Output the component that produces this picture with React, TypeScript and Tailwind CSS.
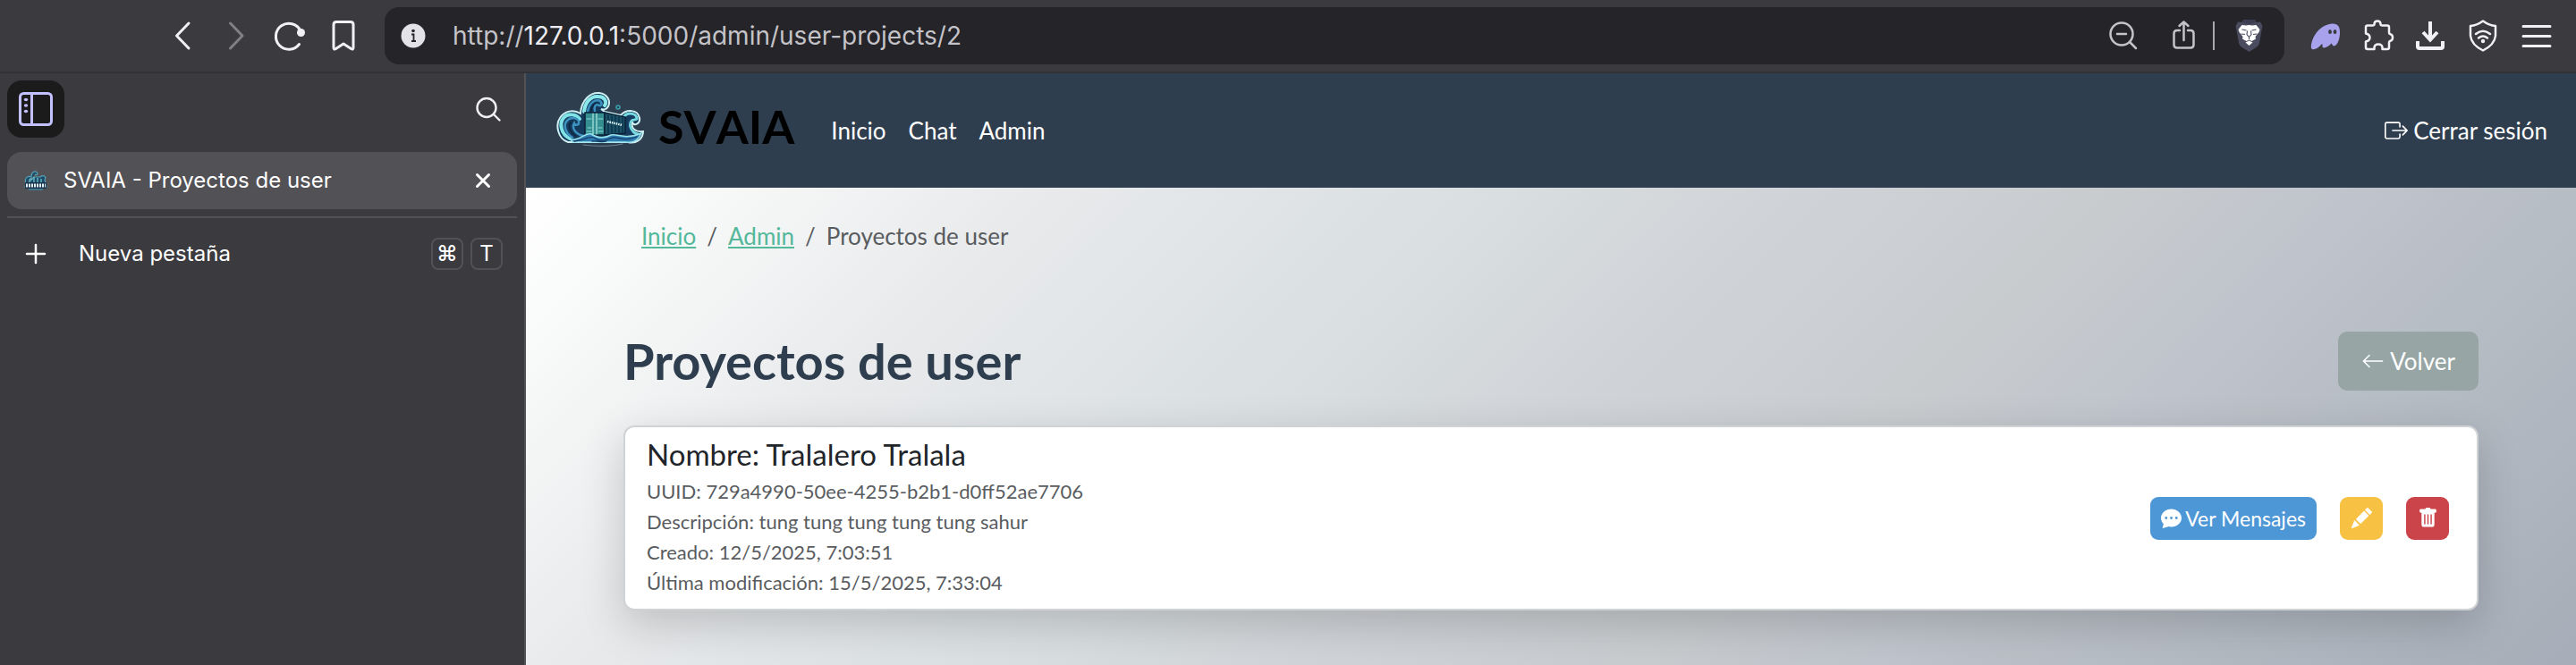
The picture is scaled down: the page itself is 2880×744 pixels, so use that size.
import { BsArrowLeft, BsBoxArrowRight, BsChatDotsFill, BsPencilFill, BsTrashFill } from "react-icons/bs";

const toolButton = "flex h-12 w-12 items-center justify-center";

function LogoMark({ className }: { className: string }) {
  return (
    <svg viewBox="0 0 98 62" className={className} aria-hidden="true" fill="none" strokeLinecap="round">
      <path
        d="M13 57 C1 53 -1 37 4 30 C9 22 19 20 27 25 C28 10 38 1 48 2 C57 3 61 11 58 17 C56 21 52 21 50 20 L54 23 L72 27 C78 20 91 20 93 30 C94 37 87 39 85 35 C83 41 88 46 97 45 C97 54 89 59 80 57 Z"
        fill="#153a5c"
        stroke="#cdf1f2"
        strokeWidth="2"
      />
      <path d="M15 53 C5 48 3 36 8 30 C13 24 23 26 26 31" stroke="#7fe3e6" strokeWidth="4" />
      <path d="M18 52 C9 46 8 37 12 33 C16 28 24 30 25 34 C26 38 21 39 20 36 C17 41 21 48 30 50" stroke="#3d93bf" strokeWidth="2.5" />
      <path d="M22 50 C14 45 13 39 16 35" stroke="#0c2440" strokeWidth="1.4" />
      <path d="M31 23 C32 12 39 5 47 6 C54 6 57 12 54 16" stroke="#8be8ea" strokeWidth="4" />
      <path d="M35 23 C36 15 41 10 47 10 C52 12 51 17 48 16 C43 13 42 19 43 22" stroke="#3a8fbd" strokeWidth="2.5" />
      <path d="M39 22 C39 18 41 15 44 13" stroke="#0c2440" strokeWidth="1.3" />
      <path d="M76 28 C81 23 90 25 90 31 C88 33 85 31 83 33 C80 39 84 46 91 48" stroke="#74dbe0" strokeWidth="3" />
      <path d="M80 29 C85 26 88 29 86 30 C80 31 78 40 84 46" stroke="#173f66" strokeWidth="1.5" />
      <path d="M32 24 H54 V49 H32 Z" fill="#338f91" stroke="#0b2238" strokeWidth="1.5" />
      <path d="M54 24 L77 29 V47 L54 49 Z" fill="#1b5267" stroke="#0b2238" strokeWidth="1.5" />
      <path d="M41 25 V48 M45 25 V48" stroke="#bdeeea" strokeWidth="1.1" />
      <path d="M34 31 H39 M47 31 H52 M35 41 H39 M47 41 H51 M34 45 H39 M47 45 H52" stroke="#8fd8d4" strokeWidth="1" />
      <path d="M58 27 V47 M62 28 V47 M66 28 V46 M70 29 V46 M74 30 V46" stroke="#0b2f45" strokeWidth="1.3" />
      <path d="M57 34 L74 38" stroke="#dff5f5" strokeWidth="2.5" strokeDasharray="1.500 1" strokeLinecap="butt" />
      <path d="M16 54 C27 56 31 46 39 48 C47 53 54 53 61 49 C69 47 76 55 95 47 C91 57 84 58 78 57 H18 Z" fill="#2f7cb0" stroke="#9ae4ec" strokeWidth="1.5" />
      <path d="M20 56 C34 54 36 50 42 52 C50 58 58 54 63 52 C70 51 74 57 90 51 M40 56 C46 55 50 58 56 56" stroke="#143c69" strokeWidth="1.3" />
      <circle cx="69" cy="18" r="2" stroke="#38a3b0" strokeWidth="1.500" />
      <path d="M30 60 C45 62 62 62 74 59" stroke="#6f8497" strokeWidth="1" />
    </svg>
  );
}

function Favicon() {
  return (
    <svg viewBox="0 0 26 22" className="h-[22px] w-[26px]" aria-hidden="true" fill="none">
      <path d="M2 15 C0 9 3 5 8 7 C8 1 13 -1 15 3 C15 5 13 5 12 4 M11 7 H18 C22 4 25 7 23 10 L25 18 H1 Z" fill="#1d4a66" stroke="#55a5ba" strokeWidth="1.2" />
      <path d="M6 12 C5 9 8 8 9 10 M11 7 V13 M15 8 V13 M19 9 V13" stroke="#6fc5d0" strokeWidth="1.3" />
      <path d="M1 13 H25 V20 H1 Z" fill="#17334d" />
      <path d="M2 16.500 H24" stroke="#e4f1f5" strokeWidth="4" strokeDasharray="2 1" />
      <path d="M5 21 H21" stroke="#3f8098" strokeWidth="1.5" />
    </svg>
  );
}

function Toolbar() {
  return (
    <header className="flex h-[82px] items-center border-b-2 border-[#323136] bg-[#3b3a3f] pr-5 pl-[180px] text-[#f1f0f5]">
      <nav aria-label="Navegación" className="flex w-[250px] items-center gap-3">
        <button aria-label="Atrás" className={toolButton}>
          <svg viewBox="0 0 48 48" className="size-12" fill="none" stroke="currentColor" strokeWidth="3" strokeLinecap="round" strokeLinejoin="round"><path d="M31 10 L17.500 24 L31 38" /></svg>
        </button>
        <button aria-label="Adelante" className="flex h-12 w-12 items-center justify-center text-[#818085]">
          <svg viewBox="0 0 48 48" className="size-12" fill="none" stroke="currentColor" strokeWidth="3" strokeLinecap="round" strokeLinejoin="round"><path d="M17.500 10 L31 24 L17.500 38" /></svg>
        </button>
        <button aria-label="Recargar" className={toolButton}>
          <svg viewBox="0 0 48 48" className="size-12" fill="none" stroke="currentColor" strokeWidth="3" strokeLinecap="round"><path d="M34.500 33.500 A14.500 14.500 0 1 1 36 18.500" /><circle cx="36.500" cy="20.500" r="4.500" fill="currentColor" stroke="none" /></svg>
        </button>
        <button aria-label="Guardar marcador" className={toolButton}>
          <svg viewBox="0 0 48 48" className="size-12" fill="none" stroke="currentColor" strokeWidth="3" strokeLinejoin="round"><path d="M13 11.500 Q13 8.500 16 8.500 H32 Q35 8.500 35 11.500 V37 Q35 40 32.500 38.500 L24 33 L15.500 38.500 Q13 40 13 37 Z" /></svg>
        </button>
      </nav>
      <div className="flex h-16 flex-1 items-center rounded-2xl bg-[#252429] pr-[18px] pl-[18px] text-[#c4c3c8]">
        <svg viewBox="0 0 28 28" className="size-7 text-[#e3e2e9]" aria-hidden="true"><circle cx="14" cy="14" r="13.500" fill="currentColor" /><circle cx="14" cy="8.500" r="1.800" fill="#252429" /><path d="M12 12.500 H14.500 V20 M12 20 H17" fill="none" stroke="#252429" strokeWidth="1.800" /></svg>
        <span className="flex-1 pl-[30px] text-[28px] leading-10"><span>http://</span><span className="text-[#edecf2]">127.0.0.1</span><span>:5000/admin/user-projects/2</span></span>
        <div className="flex items-center">
          <button aria-label="Alejar" className={toolButton}>
            <svg viewBox="0 0 48 48" className="size-12" fill="none" stroke="currentColor" strokeWidth="2.500" strokeLinecap="round"><circle cx="22" cy="22" r="12.500" /><path d="M31.500 31.500 L38 38 M17 22 H27" /></svg>
          </button>
          <button aria-label="Compartir" className="ml-5 flex h-12 w-12 items-center justify-center">
            <svg viewBox="0 0 48 48" className="size-12" fill="none" stroke="currentColor" strokeWidth="2.500" strokeLinecap="round" strokeLinejoin="round"><path d="M19 18 H16 Q12.500 18 12.500 21.500 V34 Q12.500 37.500 16 37.500 H31 Q34.500 37.500 34.500 34 V21.500 Q34.500 18 31 18 H28 M23.500 29 V9 M18.500 13 L23.500 8.500 L28.500 13" /></svg>
          </button>
          <span className="ml-2 h-8 w-0.5 bg-[#aaa9ae]" />
          <button aria-label="Brave Shields" className="ml-4 flex h-12 w-11 items-center justify-center">
            <svg viewBox="0 0 31 36" className="h-9 w-[31px]" aria-hidden="true">
              <path d="M9.500 0 H21.500 L24 3 L28 2.500 L30.500 7 L29.500 12 L27 26 Q26.500 29 23.500 31 L15.500 36 L7.500 31 Q4.500 29 4 26 L1.500 12 L0.500 7 L3 2.500 L7 3 Z" fill="#4a4b5e" />
              <path d="M10 0 H21 L24 3 L15.500 5 L7 3 Z" fill="#3c3d50" />
              <path d="M7.500 6 L12 6.500 L15.500 6 L19 6.500 L23.500 6 L27.500 11 L26.500 14 L22.500 19 L23 21.500 L18.500 24 L15.500 22.500 L12.500 24 L8 21.500 L8.500 19 L4.500 14 L3.500 11 Z M11.500 25.500 L15.500 23.500 L19.500 25.500 L15.500 29 Z" fill="#fff" />
              <path d="M7.500 11 L12.500 12 M23.500 11 L18.500 12 M13.500 12.500 L13 16.500 L15.500 19.500 L18 16.500 L17.500 12.500 M15.500 19.500 V22 M6.500 16 L11 16.500 M24.500 16 L20 16.500" fill="none" stroke="#4a4b5e" strokeWidth="1.100" />
            </svg>
          </button>
        </div>
      </div>
      <div className="flex items-center gap-[11px] pl-[22px]">
        <button aria-label="Extensión fantasma" className={toolButton}>
          <svg viewBox="0 0 48 48" className="size-12" aria-hidden="true"><path d="M8 38 C7 28 16 12 31 10.500 C38 10 40.500 14 40 22 C39.500 29 37 35 33.500 35.500 C31 35.500 31.500 32 30 33 C27.500 36 22 39 20.500 36.500 C20.500 34 21 32 19 34 C16 38 10 41 8 38 Z" fill="#a8a1ec" /><ellipse cx="29" cy="19.500" rx="1.900" ry="2.500" fill="#3b3a3f" /><ellipse cx="34.500" cy="19.500" rx="1.900" ry="2.500" fill="#3b3a3f" /></svg>
        </button>
        <button aria-label="Extensiones" className={toolButton}>
          <svg viewBox="0 0 48 48" className="size-12" fill="none" stroke="currentColor" strokeWidth="2.500" strokeLinejoin="round"><path d="M12 12.500 H17.500 Q19.500 12.500 19.500 11 Q19.500 7.500 23 7.500 Q26.500 7.500 26.500 11 Q26.500 12.500 28.500 12.500 H34 Q36 12.500 36 14.500 V20 Q36 22 37.500 22.300 Q40 23 40 26 Q40 29 37.500 29.700 Q36 30 36 32 V37 Q36 39 34 39 H28.500 V37 Q28 33.500 24 33.500 Q20 33.500 19.500 37 V39 H12 Q10 39 10 37 V30.500 Q14.500 29.500 14.500 26 Q14.500 22.500 10 21.500 V14.500 Q10 12.500 12 12.500 Z" /></svg>
        </button>
        <button aria-label="Descargas" className={toolButton}>
          <svg viewBox="0 0 48 48" className="size-12" fill="none" stroke="currentColor" strokeWidth="4"><path d="M23 8 V28 M15 20 L23 28.500 L31 20 M9 30 V36 Q9 38 11 38 H35 Q37 38 37 36 V30" /></svg>
        </button>
        <button aria-label="VPN" className={toolButton}>
          <svg viewBox="0 0 48 48" className="size-12" fill="none" stroke="currentColor" strokeWidth="2.500" strokeLinecap="round" strokeLinejoin="round"><path d="M23 7.500 Q30 12.500 37 13 V24 Q36 34 23 40.500 Q10 34 9 24 V13 Q16 12.500 23 7.500 Z M15 22 Q23 15.500 31 22 M18 26.500 Q23 22.500 28 26.500" /><circle cx="23" cy="30" r="2.200" fill="currentColor" stroke="none" /></svg>
        </button>
        <button aria-label="Menú" className={toolButton}>
          <svg viewBox="0 0 48 48" className="size-12" fill="none" stroke="currentColor" strokeWidth="3" strokeLinecap="round"><path d="M9 13.500 H39 M9 24.500 H39 M9 35.500 H39" /></svg>
        </button>
      </div>
    </header>
  );
}

function Sidebar() {
  return (
    <aside className="w-[588px] shrink-0 border-r-2 border-[#525156] bg-[#3b3a3f] px-2 pt-2 text-white">
      <div className="flex items-center justify-between pr-4">
        <button aria-label="Panel de pestañas" className="flex size-16 items-center justify-center rounded-2xl bg-[#1b1b1c]">
          <svg viewBox="0 0 38 38" className="size-[38px]" fill="none" stroke="#c3c0ff" strokeWidth="3"><rect x="1.500" y="1.500" width="35" height="35" rx="4" /><path d="M14.500 2 V36" /><g fill="#c3c0ff" stroke="none"><ellipse cx="8" cy="8.500" rx="2.200" ry="1.700" /><ellipse cx="8" cy="15" rx="2.200" ry="1.700" /><ellipse cx="8" cy="21.500" rx="2.200" ry="1.700" /></g></svg>
        </button>
        <button aria-label="Buscar pestañas" className="flex size-8 items-center justify-center">
          <svg viewBox="0 0 32 32" className="size-8" fill="none" stroke="#f1f0f5" strokeWidth="2.400" strokeLinecap="round"><circle cx="14" cy="14.500" r="10.500" /><path d="M22 22 L28.500 28.500" /></svg>
        </button>
      </div>
      <div className="mt-4 flex h-16 items-center rounded-2xl bg-[#525156] pr-[22px] pl-[19px]">
        <Favicon />
        <span className="flex-1 pl-[18px] text-[24px] leading-8">SVAIA - Proyectos de user</span>
        <button aria-label="Cerrar pestaña" className="flex size-8 items-center justify-center">
          <svg viewBox="0 0 32 32" className="size-8" fill="none" stroke="currentColor" strokeWidth="3" strokeLinecap="round"><path d="M9.500 9.500 L22.500 22.500 M22.500 9.500 L9.500 22.500" /></svg>
        </button>
      </div>
      <hr className="mt-2 border-t-2 border-[#525156]" />
      <button className="mt-2 flex h-16 w-full items-center pr-4 pl-4">
        <svg viewBox="0 0 32 32" className="size-8" fill="none" stroke="currentColor" strokeWidth="2.500" strokeLinecap="round" aria-hidden="true"><path d="M16 6 V26 M6 16 H26" /></svg>
        <span className="flex-1 pl-8 text-left text-[24px] leading-8">Nueva pestaña</span>
        <span className="flex gap-2 text-[24px]">
          <kbd className="flex size-9 items-center justify-center rounded-lg border-2 border-[#525156] font-['Inter','DejaVu_Sans',sans-serif] font-medium">⌘</kbd>
          <kbd className="flex size-9 items-center justify-center rounded-lg border-2 border-[#525156] font-['Inter',sans-serif]">T</kbd>
        </span>
      </button>
    </aside>
  );
}

function Project() {
  return (
    <article className="mt-[39px] flex items-center justify-between rounded-xl border-2 border-[#d0d3d6] bg-white py-3 pr-[31px] pl-6 shadow-[0_16px_48px_rgba(0,0,0,0.18)]">
      <div className="text-[22px] leading-[34px] text-[#595c5f]">
        <h2 className="mb-[7px] text-[33px] leading-9 text-[#212529]">Nombre: Tralalero Tralala</h2>
        <p>UUID: 729a4990-50ee-4255-b2b1-d0ff52ae7706</p>
        <p>Descripción: tung tung tung tung tung sahur</p>
        <p>Creado: 12/5/2025, 7:03:51</p>
        <p>Última modificación: 15/5/2025, 7:33:04</p>
      </div>
      <div className="flex items-center gap-[26px] text-[23px] leading-8 text-white">
        <a href="#mensajes" className="flex h-12 items-center gap-1 rounded-[9px] bg-[#4e97d6] px-3"><BsChatDotsFill aria-hidden="true" />Ver Mensajes</a>
        <button aria-label="Editar" className="flex size-12 items-center justify-center rounded-[9px] bg-[#f7c244]"><BsPencilFill /></button>
        <button aria-label="Eliminar" className="flex size-12 items-center justify-center rounded-[9px] bg-[#cb444a]"><BsTrashFill /></button>
      </div>
    </article>
  );
}

export default function App() {
  return (
    <div className="flex min-h-screen flex-col font-['Inter',sans-serif]">
      <Toolbar />
      <div className="flex flex-1">
        <Sidebar />
        <div className="flex min-w-0 flex-1 flex-col font-['Lato',sans-serif] text-[26px] leading-[38px]">
          <header className="flex h-32 items-center justify-between bg-[#2f3e4e] pr-8 pl-[34px] text-white">
            <nav aria-label="Principal" className="flex items-center gap-[25px]">
              <a href="#svaia" className="mr-4 flex items-center gap-4 pb-[26px] text-[52px] leading-[62px] font-bold text-black">
                <LogoMark className="h-[62px] w-[98px]" />
                <span className="pt-4 [font-kerning:none]">SVAIA</span>
              </a>
              <a href="#inicio">Inicio</a>
              <a href="#chat">Chat</a>
              <a href="#admin">Admin</a>
            </nav>
            <a href="#salir" className="flex items-center gap-[6px]"><BsBoxArrowRight aria-hidden="true" />Cerrar sesión</a>
          </header>
          <main className="flex-1 bg-[linear-gradient(135deg,#ffffff_0%,#f9fbfa_6%,#e9eaec_20%,#e0e4e7_30%,#d8dddf_40%,#d0d3d7_50%,#c7cbce_64%,#c0c4cc_72%,#b4bbc3_84%,#a6adb8_100%)] px-[109px] pt-[35px]">
            <nav aria-label="Migas de pan" className="flex gap-3 pl-5 text-[#595c5f]">
              <a href="#inicio" className="text-[#54b89a] underline decoration-2 underline-offset-2">Inicio</a><span>/</span>
              <a href="#admin" className="text-[#54b89a] underline decoration-2 underline-offset-2">Admin</a><span>/</span>
              <span>Proyectos de user</span>
            </nav>
            <div className="mt-[88px] flex items-center justify-between">
              <h1 className="text-[56px] leading-[66px] font-bold text-[#2f3e4e]">Proyectos de user</h1>
              <a href="#volver" className="flex h-[66px] items-center gap-[6px] rounded-[10px] bg-[#97a5a5] px-[26px] text-white"><BsArrowLeft aria-hidden="true" />Volver</a>
            </div>
            <Project />
          </main>
        </div>
      </div>
    </div>
  );
}
